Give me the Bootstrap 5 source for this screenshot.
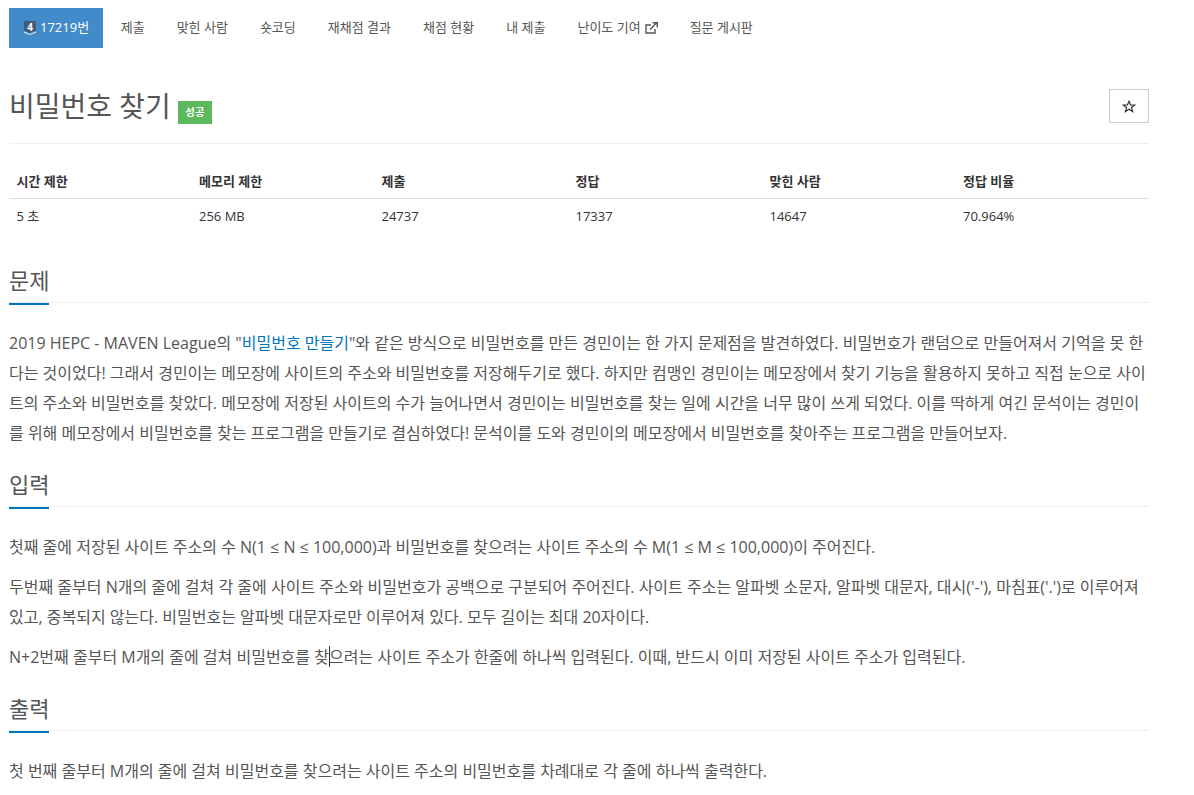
<!DOCTYPE html>
<html lang="ko"><head><meta charset="utf-8">
<link href="https://cdn.jsdelivr.net/npm/bootstrap@5.3.0/dist/css/bootstrap.min.css" rel="stylesheet">
<style>
body{font-family:"Open Sans","Noto Sans CJK KR",sans-serif;color:#555;background:#fff;overflow:hidden;margin:0}
.pg{width:1140px;margin-left:9px}
.tabs{padding-top:8px;height:48px;font-size:13px;gap:0}
.tabs a{display:flex;align-items:center;height:40px;padding:0 16px;color:#555;text-decoration:none;white-space:nowrap}
.tabs a.on{background:#428bca;color:#fff;padding:0 14px 0 15px;margin-right:1.6px}
.tier{margin-right:3px}
.ttl-row{height:96px;border-bottom:1px solid #eee;padding-top:41px}
.ttl{font-size:28px;line-height:34px;color:#555;font-weight:400;margin:0}
.lbl{background:#5cb85c;color:#fff;font-size:10.5px;font-weight:700;padding:0 7.5px;height:23px;line-height:23px;margin-left:7px;margin-top:12px}
.star{width:40px;height:34px;border:1px solid #ccc;color:#333}
.info{margin-top:21px;font-size:13px;color:#333;margin-bottom:0;border-collapse:collapse;width:100%;table-layout:fixed}
.info th{height:33px;border-bottom:1px solid #ddd;font-weight:700;padding:0 7.5px;vertical-align:middle}
.info td{height:37px;padding:0 7.5px;vertical-align:middle}
.sec{margin-top:12px;border-bottom:1px dotted #ddd;height:47px;position:relative}
.info+.sec{margin-top:21px}
.sec h2{font-size:22px;font-weight:400;color:#555;line-height:30px;margin:0;padding-top:9px;width:40px;height:38px;box-sizing:content-box;white-space:nowrap;border-bottom:2px solid #0076c0}
.txt{font-size:16px;line-height:30px;margin:0;color:#555}
.sec+.txt{margin-top:25px}
.txt+.txt{margin-top:10px}
.txt a{color:#0076c0;text-decoration:none}
.caret-i{position:relative}
.caret-i::after{content:"";position:absolute;left:0;top:0;height:21px;width:1px;background:#333}
</style></head><body>
<div class="pg">
<nav class="tabs d-flex">
<a class="on" href="#"><svg width="13" height="14" viewBox="0 0 13 14" class="tier flex-shrink-0"><path d="M0 0h12v9.500l-6 2.500-6-2.500z" fill="#435b78"/><path d="M0 10.500l6 2.500 6-2.500v1.200L6 14 0 11.700z" fill="#dfe6ee"/><text x="6" y="9.500" font-size="10" font-weight="700" fill="#fff" text-anchor="middle" font-family="Open Sans">4</text></svg>17219번</a>
<a href="#">제출</a><a href="#">맞힌 사람</a><a href="#">숏코딩</a><a href="#">재채점 결과</a><a href="#">채점 현황</a><a href="#">내 제출</a>
<a href="#">난이도 기여<svg class="ms-1" width="13" height="12" viewBox="0 0 13 12" fill="none" stroke="#555" stroke-width="1.400"><path d="M10 7v4H1V3h5"/><path d="M5 7.500 11.500 1M7.500 .7h4.800v4.800"/></svg></a>
<a href="#">질문 게시판</a>
</nav>
<div class="ttl-row d-flex">
<h1 class="ttl">비밀번호 찾기</h1><span class="lbl">성공</span>
<button class="star btn rounded-0 p-0 ms-auto d-flex align-items-center justify-content-center bg-white" type="button" aria-label="즐겨찾기"><svg width="14" height="13" viewBox="0 0 14 13"><path d="M7 1.200 8.600 5h4l-3.200 2.500L10.600 11.600 7 9.200 3.400 11.600 4.600 7.500 1.400 5h4z" fill="none" stroke="#333" stroke-width="1.200"/></svg></button>
</div>
<table class="info"><colgroup><col style="width:182.500px"><col style="width:182.500px"><col style="width:194px"><col style="width:194px"><col style="width:193.500px"><col></colgroup>
<thead><tr><th>시간 제한</th><th>메모리 제한</th><th>제출</th><th>정답</th><th>맞힌 사람</th><th>정답 비율</th></tr></thead>
<tbody><tr><td>5 초</td><td>256 MB</td><td>24737</td><td>17337</td><td>14647</td><td>70.964%</td></tr></tbody></table>
<div class="sec"><h2>문제</h2></div>
<p class="txt">2019 HEPC - MAVEN League의 "<a href="#">비밀번호 만들기</a>"와 같은 방식으로 비밀번호를 만든 경민이는 한 가지 문제점을 발견하였다. 비밀번호가 랜덤으로 만들어져서 기억을 못 한다는 것이었다! 그래서 경민이는 메모장에 사이트의 주소와 비밀번호를 저장해두기로 했다. 하지만 컴맹인 경민이는 메모장에서 찾기 기능을 활용하지 못하고 직접 눈으로 사이트의 주소와 비밀번호를 찾았다. 메모장에 저장된 사이트의 수가 늘어나면서 경민이는 비밀번호를 찾는 일에 시간을 너무 많이 쓰게 되었다. 이를 딱하게 여긴 문석이는 경민이를 위해 메모장에서 비밀번호를 찾는 프로그램을 만들기로 결심하였다! 문석이를 도와 경민이의 메모장에서 비밀번호를 찾아주는 프로그램을 만들어보자.</p>
<div class="sec"><h2>입력</h2></div>
<p class="txt">첫째 줄에 저장된 사이트 주소의 수 N(1 ≤ N ≤ 100,000)과 비밀번호를 찾으려는 사이트 주소의 수 M(1 ≤ M ≤ 100,000)이 주어진다.</p>
<p class="txt">두번째 줄부터 N개의 줄에 걸쳐 각 줄에 사이트 주소와 비밀번호가 공백으로 구분되어 주어진다. 사이트 주소는 알파벳 소문자, 알파벳 대문자, 대시('-'), 마침표('.')로 이루어져 있고, 중복되지 않는다. 비밀번호는 알파벳 대문자로만 이루어져 있다. 모두 길이는 최대 20자이다.</p>
<p class="txt">N+2번째 줄부터 M개의 줄에 걸쳐 비밀번호를 찾<span class="caret-i">으</span>려는 사이트 주소가 한줄에 하나씩 입력된다. 이때, 반드시 이미 저장된 사이트 주소가 입력된다.</p>
<div class="sec"><h2>출력</h2></div>
<p class="txt">첫 번째 줄부터 M개의 줄에 걸쳐 비밀번호를 찾으려는 사이트 주소의 비밀번호를 차례대로 각 줄에 하나씩 출력한다.</p>
</div>
</body></html>
